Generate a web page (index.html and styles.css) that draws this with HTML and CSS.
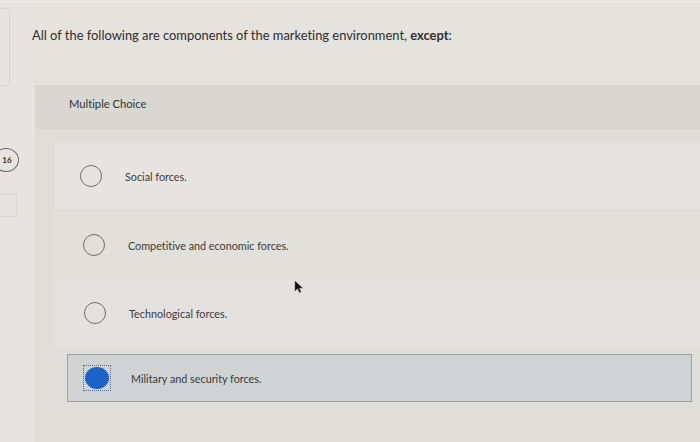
FILE: index.html
```html
<!DOCTYPE html>
<html>
<head>
<meta charset="utf-8">
<link rel="stylesheet" href="styles.css">
</head>
<body>
<div class="page">
  <aside class="rail">
    <div class="rail-box"></div>
    <div class="badge">16</div>
    <div class="rail-small"></div>
  </aside>
  <main class="main">
    <p class="question">All of the following are components of the marketing environment, <b>except</b>:</p>
    <section class="panel">
      <div class="panel-head">Multiple Choice</div>
      <ul class="options">
        <li class="opt opt1"><span class="radio"></span><span class="label">Social forces.</span></li>
        <li class="opt opt2"><span class="radio"></span><span class="label">Competitive and economic forces.</span></li>
        <li class="opt opt3"><span class="radio"></span><span class="label">Technological forces.</span></li>
        <li class="opt selected"><span class="focus"><span class="radio on"></span></span><span class="label">Military and security forces.</span></li>
      </ul>
    </section>
  </main>
  <svg class="cursor" width="10" height="13" viewBox="0 0 10 13"><path d="M1 1 L1 11 L3.5 8.5 L5.5 12.5 L7 11.8 L5 8 L8.5 8 Z" fill="#111" stroke="#555" stroke-width="0.5"/></svg>
</div>
</body>
</html>
```
FILE: styles.css
```css
html, body {
  margin: 0;
  padding: 0;
}
body {
  background: #e4e2dd;
  font-family: "Lato", "Open Sans", sans-serif;
  font-variant-ligatures: none;
  color: #333;
  width: 700px;
  height: 442px;
  overflow: hidden;
}
.page {
  position: relative;
  display: flex;
  height: 442px;
  border-top: 3px solid #e9e8e4;
  box-sizing: border-box;
  background: #e5e3de;
}
.rail {
  width: 35px;
  flex: none;
  display: flex;
  flex-direction: column;
  background: #e6e4e0;
}
.rail-box {
  width: 9px;
  height: 76px;
  margin-top: 5px;
  border: 1px solid #d6d4cf;
  border-left: none;
  border-radius: 0 3px 3px 0;
}
.badge {
  margin-top: 62px;
  margin-left: -7px;
  width: 22px;
  height: 22px;
  border: 1.3px solid #6e6d6a;
  border-radius: 50%;
  font-size: 8px;
  font-weight: 700;
  color: #333;
  display: flex;
  align-items: center;
  justify-content: center;
  padding-left: 2px;
  box-sizing: content-box;
}
.rail-small {
  margin-top: 22px;
  width: 16px;
  height: 21px;
  border: 1px solid #d8d6d1;
  border-left: none;
}
.main {
  flex: 1;
  display: flex;
  flex-direction: column;
}
.question {
  margin: 24px 0 0 -3px;
  font-size: 12.9px;
  color: #2e2e2e;
  height: 58px;
  line-height: 16px;
}
.question b {
  font-weight: 700;
}
.panel {
  flex: 1;
  background: #e0ded9;
  display: flex;
  flex-direction: column;
}
.panel-head {
  height: 44px;
  background: #d9d7d2;
  padding-left: 34px;
  display: flex;
  align-items: center;
  font-size: 11.2px;
  color: #333;
  padding-bottom: 7px;
  box-sizing: border-box;
}
.options {
  list-style: none;
  margin: 14px 0 0 20px;
  padding: 0;
  display: flex;
  flex-direction: column;
}
.opt {
  height: 68px;
  display: flex;
  align-items: center;
  padding-left: 25px;
  font-size: 10.8px;
  color: #3a3a3a;
}
.opt1 {
  background: #e6e4e0;
  padding-left: 25px;
  height: 66px;
  margin-bottom: 2px;
}
.opt2 {
  background: #e2e0db;
  padding-left: 28px;
}
.opt3 {
  background: #e4e2de;
  padding-left: 29px;
}
.radio {
  width: 20px;
  height: 20px;
  border: 1.3px solid #6f6f6f;
  border-radius: 50%;
  flex: none;
  background: transparent;
}
.label {
  margin-left: 23px;
}
.selected {
  height: 48px;
  margin: 7px 8px 0 12px;
  padding-left: 15px;
  background: #cfd3d3;
  border: 1px solid #9ea1a3;
  box-sizing: border-box;
}
.focus {
  width: 26px;
  height: 24px;
  border: 1px dotted #5a6a8a;
  display: flex;
  align-items: center;
  justify-content: center;
  flex: none;
}
.radio.on {
  width: 24px;
  height: 22px;
  border: none;
  background: #1b63c9;
}
.selected .label {
  margin-left: 20px;
}
.cursor {
  position: absolute;
  left: 294px;
  top: 277px;
}
```
